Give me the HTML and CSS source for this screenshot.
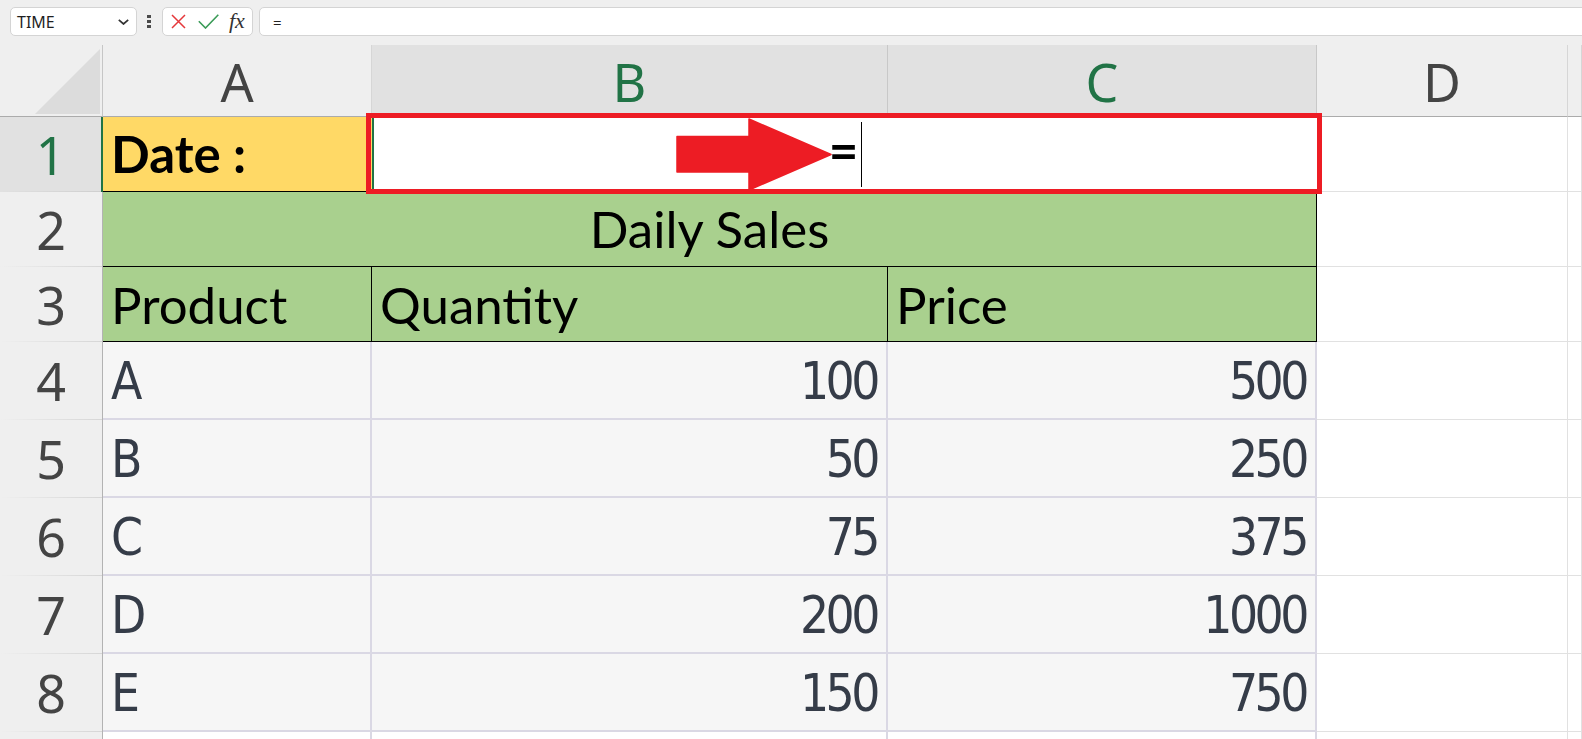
FILE: index.html
```html
<!DOCTYPE html>
<html lang="en">
<head>
<meta charset="utf-8">
<title>Sheet</title>
<link rel="stylesheet" href="styles.css">
</head>
<body>
<div class="app">
  <div class="toolbar">
    <div class="namebox">
      <span>TIME</span>
      <svg class="chev" width="11" height="6" viewBox="0 0 11 6"><polyline points="0.8,0.8 5.5,5 10.2,0.8" fill="none" stroke="#333" stroke-width="1.7"/></svg>
    </div>
    <div class="grip"><i></i><i></i><i></i></div>
    <div class="fxbox">
      <svg class="ic-x" width="15" height="15" viewBox="0 0 15 15"><path d="M1 1 L14 14 M14 1 L1 14" stroke="#e5383b" stroke-width="1.5" fill="none"/></svg>
      <svg class="ic-ok" width="21" height="15" viewBox="0 0 21 15"><polyline points="0.8,7.2 7.5,14 20.3,0.8" fill="none" stroke="#3a9b57" stroke-width="1.6"/></svg>
      <span class="fx">fx</span>
    </div>
    <div class="formula">=</div>
  </div>

  <div class="sheet">
    <!-- header row -->
    <div class="corner"><svg width="65" height="65" viewBox="0 0 65 65"><polygon points="0,65 65,65 65,0" fill="#dcdcdc"/></svg></div>
    <div class="ch">A</div>
    <div class="ch sel">B</div>
    <div class="ch sel">C</div>
    <div class="ch">D</div>
    <div class="ch"></div>

    <!-- row 1 -->
    <div class="rh sel">1</div>
    <div class="cell date cal">Date :</div>
    <div class="cell edit cal">
      <span class="eq">=</span><span class="caret"></span>
      <div class="redbox"></div>
      <svg class="arrow" width="160" height="75" viewBox="0 0 160 75"><path d="M3 19.5 H75 V2 L157 37.5 L75 73 V55 H3 Z" fill="#ed1c24" stroke="#ed1c24" stroke-width="1.5" stroke-linejoin="round"/></svg>
    </div>
    <div class="cell"></div>
    <div class="cell"></div>

    <!-- row 2 -->
    <div class="rh">2</div>
    <div class="cell title cal">Daily Sales</div>
    <div class="cell"></div>
    <div class="cell"></div>

    <!-- row 3 -->
    <div class="rh">3</div>
    <div class="cell hdr cal">Product</div>
    <div class="cell hdr cal">Quantity</div>
    <div class="cell hdr cal">Price</div>
    <div class="cell"></div>
    <div class="cell"></div>

    <!-- row 4 -->
    <div class="rh">4</div>
    <div class="cell dat apt">A</div>
    <div class="cell dat apt num">100</div>
    <div class="cell dat apt num">500</div>
    <div class="cell"></div>
    <div class="cell"></div>

    <!-- row 5 -->
    <div class="rh">5</div>
    <div class="cell dat apt">B</div>
    <div class="cell dat apt num">50</div>
    <div class="cell dat apt num">250</div>
    <div class="cell"></div>
    <div class="cell"></div>

    <!-- row 6 -->
    <div class="rh">6</div>
    <div class="cell dat apt">C</div>
    <div class="cell dat apt num">75</div>
    <div class="cell dat apt num">375</div>
    <div class="cell"></div>
    <div class="cell"></div>

    <!-- row 7 -->
    <div class="rh">7</div>
    <div class="cell dat apt">D</div>
    <div class="cell dat apt num">200</div>
    <div class="cell dat apt num">1000</div>
    <div class="cell"></div>
    <div class="cell"></div>

    <!-- row 8 -->
    <div class="rh">8</div>
    <div class="cell dat apt">E</div>
    <div class="cell dat apt num">150</div>
    <div class="cell dat apt num">750</div>
    <div class="cell"></div>
    <div class="cell"></div>

    <!-- row 9 (only its top edge is visible) -->
    <div class="rh"></div>
    <div class="cell blank"></div>
    <div class="cell blank"></div>
    <div class="cell blank"></div>
    <div class="cell"></div>
    <div class="cell"></div>
  </div>
</div>
</body>
</html>
```

FILE: styles.css
```css
* { box-sizing: border-box; margin: 0; padding: 0; }
html, body { width: 100%; height: 100%; overflow: hidden; }
body { background: #efefef; font-family: "Noto Sans", sans-serif; }

.app { display: flex; flex-direction: column; height: 100vh; }

/* ---------- formula bar ---------- */
.toolbar {
  height: 45px; flex: none;
  display: flex; align-items: flex-start;
  padding: 7px 0 0 10px;
  background: #efefef;
}
.namebox {
  width: 127px; height: 29px;
  background: #fff; border: 1px solid #d4d4d4; border-radius: 5px;
  display: flex; align-items: center; justify-content: space-between;
  padding: 0 7px 0 6px;
  font-size: 16px; color: #1f1f1f;
}
.chev { margin-top: 1px; }
.grip { width: 5px; margin: 8px 10px 0 10px; display: flex; flex-direction: column; gap: 2px; }
.grip i { display: block; width: 4px; height: 3px; background: #4a4a4a; }
.fxbox {
  width: 91px; height: 29px;
  background: #fff; border: 1px solid #d4d4d4; border-radius: 5px;
  display: flex; align-items: center;
  padding-left: 8px;
}
.ic-x { margin-right: 12px; }
.ic-ok { margin-right: 10px; margin-top: -1px; }
.fx {
  font-family: "Liberation Serif", serif; font-style: italic;
  font-size: 22px; line-height: 1; color: #333; margin-top: -2px;
}
.formula {
  flex: 1; height: 29px; margin-left: 6px; margin-right: -8px;
  background: #fff; border: 1px solid #d4d4d4; border-radius: 5px;
  display: flex; align-items: center;
  padding-left: 13px; font-size: 15px; color: #222;
}

/* ---------- grid ---------- */
.sheet {
  flex: 1; min-height: 0; overflow: hidden;
  display: grid;
  grid-template-columns: 103px 269px 516px 429px 251px 1fr;
  grid-template-rows: 72px 75px 75px 75px repeat(6, 78px);
  background: #fff;
}

.corner {
  background: #efefef;
  border-right: 1px solid #c6c6c6; border-bottom: 1px solid #ababab;
  display: flex; align-items: flex-end; justify-content: flex-end;
  padding: 0 2px 2px 0;
}
.ch {
  background: #efefef;
  border-right: 1px solid #d6d6d6; border-bottom: 1px solid #ababab;
  display: flex; align-items: center; justify-content: center;
  font-family: "Noto Sans", sans-serif; font-size: 52px; line-height: 1; color: #444;
  padding-top: 2px;
}
.ch.sel { background: #e1e1e1; color: #217346; border-right-color: #c8c8c8; }

.rh {
  background: linear-gradient(to right, rgba(217,217,217,0), #d6d6d6) bottom / 100% 1px no-repeat, #efefef;
  border-right: 1px solid #b3b3b3;
  display: flex; align-items: center; justify-content: center;
  font-family: "Noto Sans", sans-serif; font-size: 52px; line-height: 1; color: #444;
}
.rh.sel {
  background: linear-gradient(to right, rgba(217,217,217,0), #cfcfcf) bottom / 100% 1px no-repeat, #e1e1e1;
  color: #217346; border-right: 2px solid #217346;
}

.cell {
  background: #fff;
  border-right: 1px solid #e1e1e1; border-bottom: 1px solid #e1e1e1;
  display: flex; align-items: flex-end;
  white-space: nowrap;
}

.cal { font-family: "Lato", sans-serif; font-size: 51px; line-height: 1; color: #000; }
.apt {
  font-family: "Liberation Sans Narrow", "DejaVu Sans Condensed", Roboto, sans-serif;
  font-size: 51px; line-height: 1; color: #353c48; letter-spacing: -3.5px;
}

.date {
  background: #ffd966; font-weight: 700;
  border-right: none; border-bottom: 1px solid #000;
  padding: 0 0 12px 8px;
}
.edit {
  grid-column: span 2;
  position: relative;
  background: #fff;
  border: none; border-left: 2px solid #217346;
  justify-content: center;
  padding-bottom: 5px;
}
.eq { font-weight: 700; margin-bottom: 12px; }
.caret {
  width: 0; height: 65px;
  border-left: 1px solid #000;
  margin-left: 3px;
}
.redbox {
  position: absolute; left: -8px; top: -4px; right: -5px; bottom: -2px;
  border: 5px solid #ed1c24; z-index: 3;
}
.arrow { position: absolute; left: 300px; top: 0; z-index: 2; }

.title {
  grid-column: span 3;
  background: #a9d08e;
  border-right: 1px solid #000; border-bottom: 1px solid #000;
  justify-content: center;
  padding-bottom: 12px;
}
.hdr {
  background: #a9d08e;
  border-right: 1px solid #000; border-bottom: 1px solid #000;
  padding: 0 0 11px 8px;
}
.dat {
  background: #f6f6f6;
  border-right: 2px solid #dad8e4; border-bottom: 2px solid #dad8e4;
  padding: 0 0 11px 8px;
}
.dat.num { justify-content: flex-end; padding: 0 9px 11px 0; }
.blank { border-right: 2px solid #dad8e4; border-bottom: none; }
```
